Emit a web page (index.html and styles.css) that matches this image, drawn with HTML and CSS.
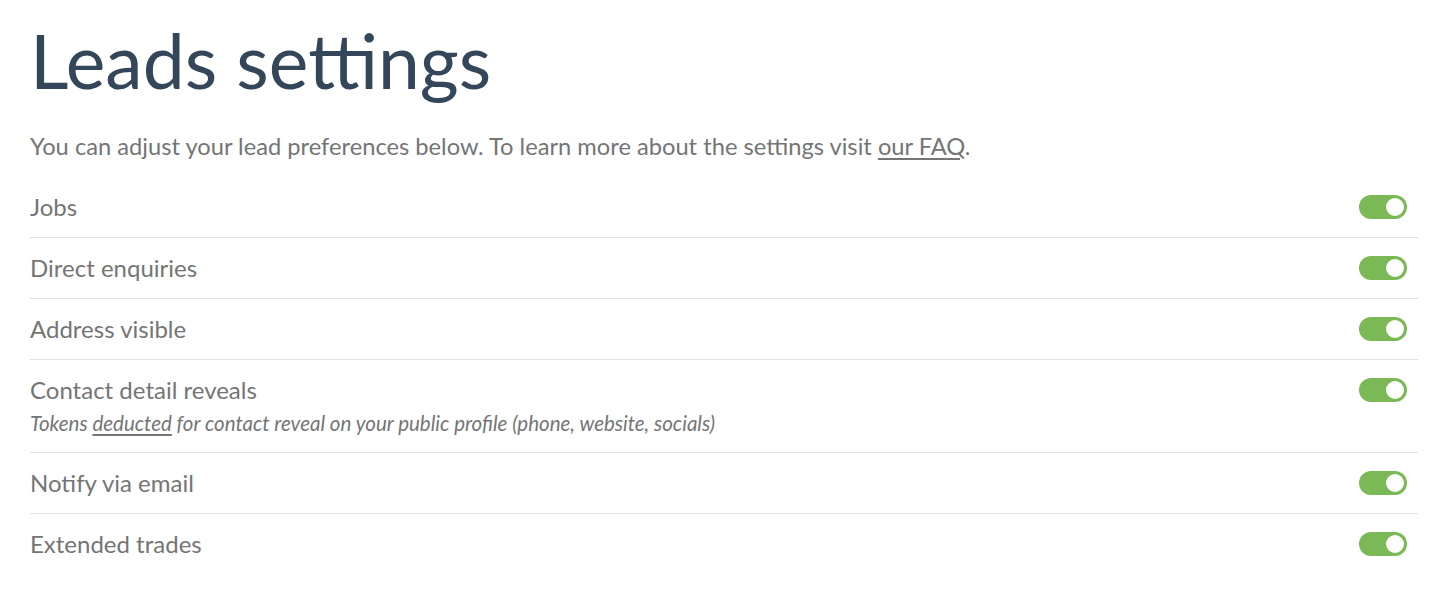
FILE: index.html
```html
<!DOCTYPE html>
<html lang="en">
<head>
<meta charset="utf-8">
<title>Leads settings</title>
<link rel="stylesheet" href="styles.css">
</head>
<body>
<main class="page">
  <h1 class="title">Leads settings</h1>
  <p class="intro">You can adjust your lead preferences below. To learn more about the settings visit <a href="#" class="link">our FAQ</a>.</p>
  <ul class="settings">
    <li class="row"><div class="label"><span class="name">Jobs</span></div><span class="toggle"><span class="knob"></span></span></li>
    <li class="row"><div class="label"><span class="name">Direct enquiries</span></div><span class="toggle"><span class="knob"></span></span></li>
    <li class="row"><div class="label"><span class="name">Address visible</span></div><span class="toggle"><span class="knob"></span></span></li>
    <li class="row"><div class="label"><span class="name">Contact detail reveals</span><span class="hint">Tokens <a href="#" class="link">deducted</a> for contact reveal on your public profile (phone, website, socials)</span></div><span class="toggle"><span class="knob"></span></span></li>
    <li class="row"><div class="label"><span class="name">Notify via email</span></div><span class="toggle"><span class="knob"></span></span></li>
    <li class="row"><div class="label"><span class="name">Extended trades</span></div><span class="toggle"><span class="knob"></span></span></li>
  </ul>
</main>
</body>
</html>
```

FILE: styles.css
```css
html, body {
  margin: 0;
  padding: 0;
  background: #ffffff;
}

body {
  font-family: "Lato", "Liberation Sans", sans-serif;
  color: #757575;
}

.page {
  padding: 15px 36px 0 30px;
}

.title {
  margin: 0;
  font-size: 75px;
  font-weight: 400;
  line-height: 90px;
  color: #34465a;
}

.intro {
  margin: 28px 0 0;
  font-size: 23.7px;
  line-height: 26px;
  color: #757575;
}

.link {
  color: #757575;
  text-decoration: underline;
  text-underline-offset: 3px;
}

.settings {
  list-style: none;
  margin: 18px 0 0;
  padding: 0;
}

.row {
  display: flex;
  align-items: flex-start;
  justify-content: space-between;
  padding: 15px 11px 15px 0;
  border-bottom: 1px solid #e3e3e3;
}

.row:last-child {
  border-bottom: none;
}

.label {
  display: flex;
  flex-direction: column;
}

.name {
  font-size: 24px;
  line-height: 30px;
}

.hint {
  margin-top: 4px;
  font-size: 20.5px;
  font-style: italic;
  line-height: 28px;
}

.toggle {
  margin-top: 3px;
  width: 48px;
  height: 24px;
  border-radius: 12px;
  background: #7ab955;
  display: flex;
  align-items: center;
  justify-content: flex-end;
  padding: 0 3px;
  box-sizing: border-box;
}

.knob {
  width: 18px;
  height: 18px;
  border-radius: 50%;
  background: #ffffff;
}
```
